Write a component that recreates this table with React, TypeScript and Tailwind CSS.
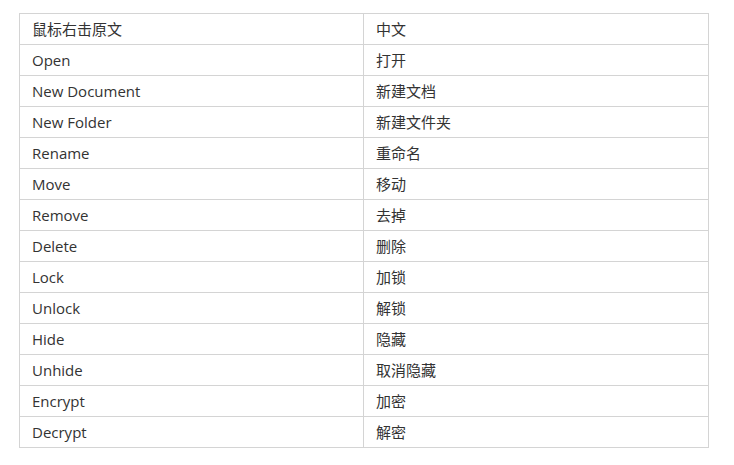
import React from "react";

const rows: [string, string][] = [
  ["鼠标右击原文", "中文"],
  ["Open", "打开"],
  ["New Document", "新建文档"],
  ["New Folder", "新建文件夹"],
  ["Rename", "重命名"],
  ["Move", "移动"],
  ["Remove", "去掉"],
  ["Delete", "删除"],
  ["Lock", "加锁"],
  ["Unlock", "解锁"],
  ["Hide", "隐藏"],
  ["Unhide", "取消隐藏"],
  ["Encrypt", "加密"],
  ["Decrypt", "解密"],
];

export default function App() {
  return (
    <div
      className="w-[734px] h-[465px] bg-white pt-[13px] pl-[19px]"
      style={{ fontFamily: '"Open Sans", "Noto Sans CJK SC", sans-serif' }}
    >
      <table className="border-collapse w-[690px] text-[15px] text-[#333333]">
        <tbody>
          {rows.map(([a, b], i) => (
            <tr key={i} className="h-[31px]">
              <td className="border border-[#d4d4d4] pl-3 w-[344px] leading-[20px] py-0">{a}</td>
              <td className="border border-[#d4d4d4] pl-3 leading-[20px] py-0">{b}</td>
            </tr>
          ))}
        </tbody>
      </table>
    </div>
  );
}
